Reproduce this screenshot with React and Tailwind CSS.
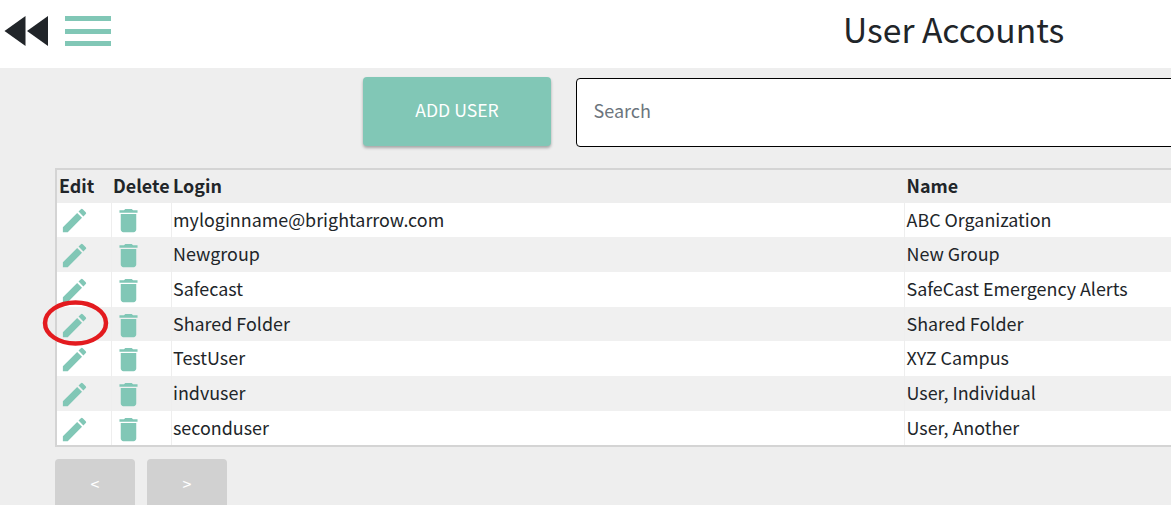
import React from "react";
import { MdEdit, MdDelete } from "react-icons/md";

const rows = [
  ["myloginname@brightarrow.com", "ABC Organization"],
  ["Newgroup", "New Group"],
  ["Safecast", "SafeCast Emergency Alerts"],
  ["Shared Folder", "Shared Folder"],
  ["TestUser", "XYZ Campus"],
  ["indvuser", "User, Individual"],
  ["seconduser", "User, Another"],
];

export default function App() {
  return (
    <div className="w-[1171px] h-[505px] overflow-hidden bg-[#eeeeee] text-[#212529] font-['Noto_Sans_CJK_SC','Noto_Sans',sans-serif]">
      <header className="h-[68px] bg-white flex items-start">
        <svg width="48" height="32" viewBox="0 0 48 32" className="ml-[4px] mt-[15px] shrink-0 fill-[#212529]">
          <polygon points="0.5,16 21.5,1 21.5,31" />
          <polygon points="23,16 44,1 44,31" />
        </svg>
        <div className="ml-[13px] mt-[16px] w-[46px] flex flex-col gap-[7.5px] shrink-0">
          <div className="h-[5px] bg-[#81c7b6]" />
          <div className="h-[5px] bg-[#81c7b6]" />
          <div className="h-[5px] bg-[#81c7b6]" />
        </div>
        <h1 className="ml-[732px] mt-[6px] text-[33.6px] leading-[46px] font-normal whitespace-nowrap">User Accounts</h1>
      </header>

      <div className="flex mt-[9px] ml-[363px] w-[900px]">
        <button className="w-[188px] h-[69px] rounded-[4px] bg-[#81c7b6] text-white text-[17.6px] pb-[3px] shadow-[0_2px_3px_rgba(0,0,0,0.3)] shrink-0">
          ADD USER
        </button>
        <div className="ml-[25px] mt-px h-[69px] flex-1 rounded-[4px] border border-black bg-white flex items-center pl-[16.5px] pb-[4px] text-[18px] text-[#6c757d]">
          Search
        </div>
      </div>

      <div className="relative ml-[55px] mt-[21px] w-[1200px] border-2 border-[#d4d4d4] bg-white text-[17.9px]">
        <div className="flex h-[32.6px] items-center bg-[#eeeeee] font-bold pb-[2px]">
          <div className="w-[55px] pl-[2px]">Edit</div>
          <div className="w-[60px] pl-px">Delete</div>
          <div className="w-[732.5px] pl-px">Login</div>
          <div className="pl-[2px]">Name</div>
        </div>
        {rows.map(([login, name], i) => (
          <div key={login} className={`flex h-[34.7px] items-center ${i % 2 ? "bg-[#f0f0f0]" : "bg-white"}`}>
            <div className="w-[55px] h-full border-r border-[#eeeeee] flex items-center pl-[2px] pt-[2px]">
              <MdEdit size={31} className="text-[#81c7b6]" />
            </div>
            <div className="w-[60px] h-full border-r border-[#eeeeee] flex items-center pl-px pt-[2px]">
              <MdDelete size={31} className="text-[#81c7b6]" />
            </div>
            <div className="w-[732.5px] h-full border-r border-[#eeeeee] flex items-center pl-px pb-[2px]">{login}</div>
            <div className="pl-[2px] pb-[2px]">{name}</div>
          </div>
        ))}
        <svg width="68" height="50" viewBox="0 0 68 50" className="absolute left-[-15.5px] top-[129px]">
          <ellipse cx="33.5" cy="24" rx="30.5" ry="20.5" fill="none" stroke="#e31b1f" strokeWidth="4.5" />
        </svg>
      </div>

      <div className="flex gap-[12px] ml-[55px] mt-[11.6px]">
        <button className="w-[80px] h-[60px] rounded-[4px] bg-[#d1d1d1] text-white text-[16px] pb-[13px]">&lt;</button>
        <button className="w-[80px] h-[60px] rounded-[4px] bg-[#d1d1d1] text-white text-[16px] pb-[13px]">&gt;</button>
      </div>
    </div>
  );
}
